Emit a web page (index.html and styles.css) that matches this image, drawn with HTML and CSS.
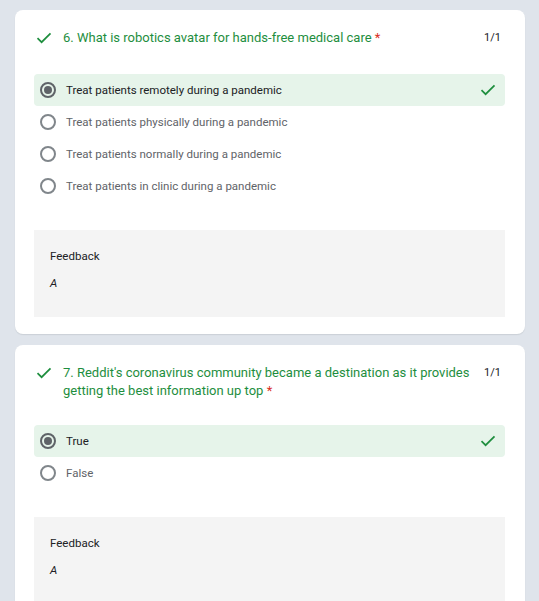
FILE: index.html
```html
<!DOCTYPE html>
<html>
<head>
<meta charset="utf-8">
<link rel="stylesheet" href="styles.css">
</head>
<body>
<div class="list">
  <div class="card">
    <div class="q">
      <svg class="qcheck" viewBox="0 0 16 12" width="16" height="12"><polyline points="1.5,6.2 5.6,10.2 14.5,1.3" fill="none" stroke="#1e8e3e" stroke-width="1.7"/></svg>
      <div class="qtext">6. What is robotics avatar for hands-free medical care <span class="req">*</span></div>
      <div class="score">1/1</div>
    </div>
    <div class="opts">
      <div class="opt sel"><span class="radio on"></span><span class="otext">Treat patients remotely during a pandemic</span><svg class="ocheck" viewBox="0 0 16 12" width="16" height="12"><polyline points="1.5,6.2 5.6,10.2 14.5,1.3" fill="none" stroke="#1e8e3e" stroke-width="1.7"/></svg></div>
      <div class="opt"><span class="radio"></span><span class="otext">Treat patients physically during a pandemic</span></div>
      <div class="opt"><span class="radio"></span><span class="otext">Treat patients normally during a pandemic</span></div>
      <div class="opt"><span class="radio"></span><span class="otext">Treat patients in clinic during a pandemic</span></div>
    </div>
    <div class="fb">
      <div class="fbtitle">Feedback</div>
      <div class="fbtext">A</div>
    </div>
  </div>
  <div class="card">
    <div class="q">
      <svg class="qcheck" viewBox="0 0 16 12" width="16" height="12"><polyline points="1.5,6.2 5.6,10.2 14.5,1.3" fill="none" stroke="#1e8e3e" stroke-width="1.7"/></svg>
      <div class="qtext">7. Reddit's coronavirus community became a destination as it provides getting the best information up top <span class="req">*</span></div>
      <div class="score">1/1</div>
    </div>
    <div class="opts opts-tight">
      <div class="opt sel"><span class="radio on"></span><span class="otext">True</span><svg class="ocheck" viewBox="0 0 16 12" width="16" height="12"><polyline points="1.5,6.2 5.6,10.2 14.5,1.3" fill="none" stroke="#1e8e3e" stroke-width="1.7"/></svg></div>
      <div class="opt"><span class="radio"></span><span class="otext">False</span></div>
    </div>
    <div class="fb">
      <div class="fbtitle">Feedback</div>
      <div class="fbtext">A</div>
    </div>
  </div>
</div>
</body>
</html>
```
FILE: styles.css
```css
html, body {
  margin: 0;
  padding: 0;
  background: #dfe4eb;
  font-family: Roboto, "Liberation Sans", sans-serif;
}
.list {
  display: flex;
  flex-direction: column;
  gap: 11px;
  padding: 10px 14px 0 15px;
}
.card {
  background: #fff;
  border-radius: 8px;
  box-shadow: 0 1px 1px rgba(60, 64, 67, 0.12);
  padding: 19px 20px 17px 19px;
}
.q {
  display: flex;
  align-items: flex-start;
  padding-left: 2px;
}
.qcheck {
  flex: none;
  margin-top: 3px;
  margin-right: 11px;
}
.qtext {
  flex: 1;
  font-size: 13px;
  line-height: 18px;
  color: #1e8e3e;
  padding-right: 14px;
}
.req {
  color: #d93025;
}
.score {
  flex: none;
  font-size: 11px;
  line-height: 18px;
  color: #202124;
  padding-right: 4px;
}
.opts {
  margin-top: 27px;
  display: flex;
  flex-direction: column;
}
.opts-tight {
  margin-top: 25px;
}
.opt {
  display: flex;
  align-items: center;
  height: 32px;
  padding-left: 6px;
  padding-right: 9px;
  border-radius: 4px;
}
.opt.sel {
  background: #e6f4ea;
}
.radio {
  flex: none;
  width: 12px;
  height: 12px;
  border: 2px solid #80868b;
  border-radius: 50%;
  position: relative;
  margin-right: 10px;
}
.radio.on {
  border-color: #5f6368;
}
.radio.on::after {
  content: "";
  position: absolute;
  left: 2px;
  top: 2px;
  width: 8px;
  height: 8px;
  border-radius: 50%;
  background: #5f6368;
}
.otext {
  flex: 1;
  font-size: 11.5px;
  color: #5f6368;
}
.opt.sel .otext {
  color: #202124;
}
.ocheck {
  flex: none;
}
.fb {
  margin-top: 28px;
  background: #f4f4f4;
  padding: 16px 16px 24px 16px;
}
.fbtitle {
  font-size: 11.5px;
  font-weight: 400;
  line-height: 20px;
  color: #202124;
}
.fbtext {
  margin-top: 7px;
  font-size: 11.5px;
  font-style: italic;
  line-height: 20px;
  color: #202124;
}
```
